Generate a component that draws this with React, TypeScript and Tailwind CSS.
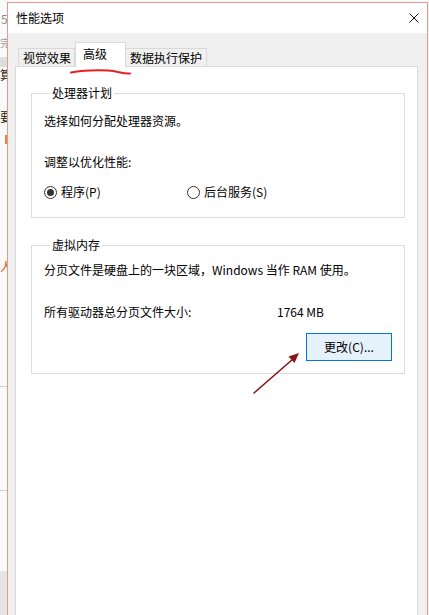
import React from 'react'

const font = { fontFamily: '"Noto Sans CJK SC", "Microsoft YaHei", sans-serif' }

function Radio({ checked, label }: { checked?: boolean; label: string }) {
  return (
    <label className="flex items-center gap-[4px] h-[16px] leading-[16px]">
      <span className="flex h-[13px] w-[13px] items-center justify-center rounded-full border border-[#333] bg-white">
        {checked && <span className="h-[7px] w-[7px] rounded-full bg-[#333]" />}
      </span>
      <span>{label}</span>
    </label>
  )
}

function Group({ title, children, className = '' }: { title: string; children: React.ReactNode; className?: string }) {
  return (
    <fieldset className={`border border-[#dcdcdc] ${className}`}>
      <legend className="ml-[6px] px-[2px] h-[16px] leading-[16px]">{title}</legend>
      {children}
    </fieldset>
  )
}

function BackgroundStrip() {
  // the window behind, cut off by the dialog
  return (
    <div className="flex w-[7px] shrink-0 flex-col overflow-hidden bg-[#fafafa] text-[12px] leading-[16px]">
      <div className="h-[11px]" />
      <div className="h-[16px] pl-[1px] text-[#8a8a8a]">5</div>
      <div className="h-[8px]" />
      <div className="h-[14px] text-[10px] text-[#9a9a9a]">完</div>
      <div className="h-[8px]" />
      <div className="h-[10px] bg-[#dedede]" />
      <div className="h-[16px] text-[#222]">算</div>
      <div className="h-[26px]" />
      <div className="h-[16px] text-[#222]">要</div>
      <div className="h-[10px]" />
      <div className="ml-[5px] h-[9px] w-[2px] bg-[#e08a3a]" />
      <div className="h-[115px]" />
      <div className="h-[16px] text-[#c06020]">人</div>
      <div className="h-[111px]" />
      <div className="h-[1px] bg-[#cfcfcf]" />
      <div className="h-[103px]" />
      <div className="h-[1px] bg-[#cfcfcf]" />
      <div className="h-[80px]" />
      <div className="flex-1 bg-[#e6e6e6]" />
    </div>
  )
}

export default function App() {
  return (
    <div className="relative flex h-[615px] w-[429px] overflow-hidden bg-[#fafafa] text-[12px] text-black" style={font}>
      <BackgroundStrip />

      <div className="mt-[2px] flex w-[421px] shrink-0 flex-col border border-b-0 border-[#e8998b]">
        {/* title bar */}
        <div className="flex h-[30px] items-center justify-between bg-white pl-[8px] pr-[9px]">
          <span className="leading-[16px]">性能选项</span>
          <svg width="10" height="10" viewBox="0 0 10 10" className="mr-[-1px]">
            <path d="M0.5 0.5 L9.5 9.5 M9.5 0.5 L0.5 9.5" stroke="#111" strokeWidth="1" />
          </svg>
        </div>

        {/* body */}
        <div className="flex flex-1 flex-col bg-[#f0f0f0] pl-[7px] pr-[9px] pt-[9px]">
          {/* tabs */}
          <div className="relative z-10 flex h-[24px] items-end pl-[3px]">
            <div className="flex h-[18px] w-[57px] items-center border border-b-0 border-[#d9d9d9] bg-[#f0f0f0] pl-[4px] leading-[16px]">
              视觉效果
            </div>
            <div className="mb-[-1px] flex h-[25px] w-[51px] items-start border border-b-0 border-[#d9d9d9] bg-white pl-[7px] pt-[3px] leading-[16px]">
              高级
            </div>
            <div className="flex h-[18px] w-[81px] items-center border border-b-0 border-l-0 border-[#d9d9d9] bg-[#f0f0f0] pl-[4px] leading-[16px]">
              数据执行保护
            </div>
          </div>

          {/* panel */}
          <div className="flex-1 border border-b-0 border-[#d9d9d9] bg-white pl-[15px] pr-[12px] pt-[18px]">
            <Group title="处理器计划" className="pl-[12px] pb-[17px]">
              <div className="mt-[12px] leading-[16px]">选择如何分配处理器资源。</div>
              <div className="mt-[25px] leading-[16px]">调整以优化性能:</div>
              <div className="mt-[14px] flex">
                <div className="w-[143px]">
                  <Radio checked label="程序(P)" />
                </div>
                <Radio label="后台服务(S)" />
              </div>
            </Group>

            <Group title="虚拟内存" className="mt-[19px] pl-[12px] pr-[12px] pb-[12px]">
              <div className="mt-[9px] leading-[16px]">分页文件是硬盘上的一块区域，Windows 当作 RAM 使用。</div>
              <div className="mt-[26px] flex leading-[16px]">
                <span className="w-[233px]">所有驱动器总分页文件大小:</span>
                <span>1764 MB</span>
              </div>
              <div className="mt-[13px] flex justify-end">
                <button className="h-[28px] w-[86px] border border-[#0078d7] bg-[#e5f1fb] leading-[16px]">
                  更改(C)...
                </button>
              </div>
            </Group>
          </div>
        </div>
      </div>

      <div className="w-[1px] shrink-0 bg-[#f0f0f0]" />

      {/* annotations drawn over the screenshot */}
      <svg className="pointer-events-none absolute left-0 top-0" width="429" height="615" viewBox="0 0 429 615">
        <path
          d="M71 72.5 C 85 70, 95 70, 108 70.5 C 118 71, 122 74, 130 73.5"
          fill="none"
          stroke="#e42222"
          strokeWidth="2"
          strokeLinecap="round"
        />
        <line x1="254" y1="393" x2="293" y2="359" stroke="#8b1414" strokeWidth="1.6" strokeLinecap="round" />
        <polygon points="299,353 294.5,363 288.5,356.5" fill="#8b1414" />
      </svg>
    </div>
  )
}
